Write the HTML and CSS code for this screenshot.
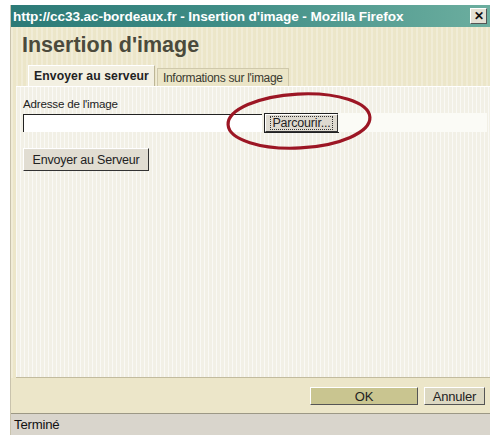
FILE: index.html
```html
<!DOCTYPE html>
<html lang="fr">
<head>
<meta charset="utf-8">
<title>Insertion d'image</title>
<link rel="stylesheet" href="styles.css">
</head>
<body>
<div class="window">
  <div class="titlebar">
    <span class="title-text">http://cc33.ac-bordeaux.fr - Insertion d'image - Mozilla Firefox</span>
    <span class="close">✕</span>
  </div>
  <div class="dialog">
    <h1 class="heading">Insertion d'image</h1>
    <div class="tabs">
      <span class="tab tab-active">Envoyer au serveur</span>
      <span class="tab">Informations sur l'image</span>
    </div>
    <div class="panel">
      <label class="field-label">Adresse de l'image</label>
      <div class="file-row">
        <span class="file-input"></span>
        <span class="btn btn-browse"><span class="focus-ring">Parcourir...</span></span>
        <span class="file-rest"></span>
        <svg class="mark" width="150" height="62" viewBox="0 0 150 62">
          <ellipse cx="75" cy="31" rx="71" ry="27" fill="none" stroke="#9c1624" stroke-width="3.2" transform="rotate(-3 75 31)"/>
        </svg>
      </div>
      <span class="btn btn-send">Envoyer au Serveur</span>
    </div>
    <div class="footer">
      <span class="btn btn-ok">OK</span>
      <span class="btn btn-cancel">Annuler</span>
    </div>
  </div>
  <div class="statusbar">Terminé</div>
</div>
</body>
</html>
```
FILE: styles.css
```css
html, body {
  margin: 0;
  padding: 0;
  background: #ffffff;
}

body {
  font-family: "Liberation Sans", Arial, sans-serif;
  color: #222;
}

.window {
  margin: 5px 0 0 10px;
  width: 480px;
  height: 430px;
  display: flex;
  flex-direction: column;
  border-left: 1px solid #c9c3ad;
  box-sizing: border-box;
}

.titlebar {
  height: 22px;
  display: flex;
  align-items: center;
  justify-content: space-between;
  padding: 0 3px 0 2px;
  background: linear-gradient(to right, #2c7a77 0%, #3f8d86 45%, #6cae9f 100%);
  color: #ffffff;
  flex: none;
}

.title-text {
  font-size: 13.6px;
  font-weight: bold;
  letter-spacing: -0.1px;
  white-space: nowrap;
}

.close {
  width: 17px;
  height: 16px;
  background: #e4e0d4;
  border: 1px solid #fff;
  border-right-color: #555;
  border-bottom-color: #555;
  color: #111;
  font-size: 12px;
  font-weight: bold;
  display: flex;
  align-items: center;
  justify-content: center;
  box-sizing: border-box;
}

.dialog {
  flex: 1;
  display: flex;
  flex-direction: column;
  background-color: #ece6c9;
  background-image: repeating-linear-gradient(to right, rgba(255,255,255,0.25) 0 2px, rgba(0,0,0,0) 2px 5px);
}

.heading {
  margin: 5px 0 0 11px;
  font-size: 21.5px;
  font-weight: bold;
  color: #4b4a3c;
  line-height: 26px;
}

.tabs {
  display: flex;
  align-items: flex-end;
  margin: 7px 0 0 17px;
  height: 21px;
}

.tab {
  font-size: 12px;
  color: #3a3a30;
  padding: 2px 5px 0 5px;
  height: 18px;
  box-sizing: border-box;
  border: 1px solid #cfc8ab;
  border-bottom: none;
  background: #ebe5c7;
  letter-spacing: -0.3px;
  white-space: nowrap;
}

.tab-active {
  font-weight: bold;
  font-size: 12.2px;
  letter-spacing: 0.1px;
  height: 21px;
  padding: 3px 5px 0 5px;
  background: #f3f0e2;
  border-color: #fff #bdb697 #bdb697 #fff;
  margin-right: 2px;
  color: #222;
}

.panel {
  flex: 1;
  margin-left: 5px;
  display: flex;
  flex-direction: column;
  align-items: flex-start;
  padding: 10px 0 0 7px;
  background-color: #f2f0e6;
  background-image: repeating-linear-gradient(to right, rgba(255,255,255,0.6) 0 1px, rgba(0,0,0,0) 1px 4px);
  border-top: 1px solid #fff;
  border-bottom: 1px solid #c2bb9e;
}

.field-label {
  font-size: 11.6px;
  color: #222;
  letter-spacing: -0.2px;
  line-height: 13px;
}

.file-row {
  position: relative;
  display: flex;
  align-items: center;
  width: 100%;
  height: 19px;
  margin-top: 3px;
}

.file-input {
  width: 239px;
  height: 18px;
  background: #ffffff;
  border-top: 1px solid #222;
  border-left: 1px solid #222;
  box-sizing: border-box;
}

.file-rest {
  flex: 1;
  height: 19px;
  background: #fbfbf6;
  margin-right: 3px;
}

.btn {
  display: inline-flex;
  align-items: center;
  justify-content: center;
  box-sizing: border-box;
  font-size: 12.5px;
  color: #222;
  background: #e6e2d6;
  border: 1px solid #fff;
  border-right-color: #333;
  border-bottom-color: #333;
  letter-spacing: -0.2px;
  white-space: nowrap;
}

.btn-browse {
  width: 73px;
  height: 18px;
  margin-left: 3px;
  outline: 1px solid #222;
  outline-offset: 0;
  background: #dedad0;
}

.focus-ring {
  border: 1px dotted #333;
  padding: 0 1px;
  line-height: 12px;
  font-size: 12.5px;
}

.mark {
  position: absolute;
  left: 201px;
  top: -23px;
  pointer-events: none;
}

.btn-send {
  margin-top: 16px;
  width: 126px;
  height: 23px;
  background: #e1ddd2;
}

.footer {
  height: 35px;
  flex: none;
  display: flex;
  align-items: flex-start;
  justify-content: flex-end;
  padding: 9px 5px 0 0;
  box-sizing: border-box;
  gap: 6px;
  background-color: #ece6c9;
}

.btn-ok {
  width: 108px;
  height: 18px;
  background: #c9c590;
  border-color: #fff #555 #555 #fff;
  font-size: 13px;
}

.btn-cancel {
  width: 61px;
  height: 18px;
  background: #dcd8c2;
  border-color: #fff #555 #555 #fff;
  font-size: 13px;
}

.statusbar {
  height: 22px;
  flex: none;
  display: flex;
  align-items: center;
  padding-left: 3px;
  font-size: 13.2px;
  color: #111;
  background: #d9d5cc;
  border-top: 1px solid #9c9885;
  box-sizing: border-box;
  letter-spacing: -0.2px;
}
```
